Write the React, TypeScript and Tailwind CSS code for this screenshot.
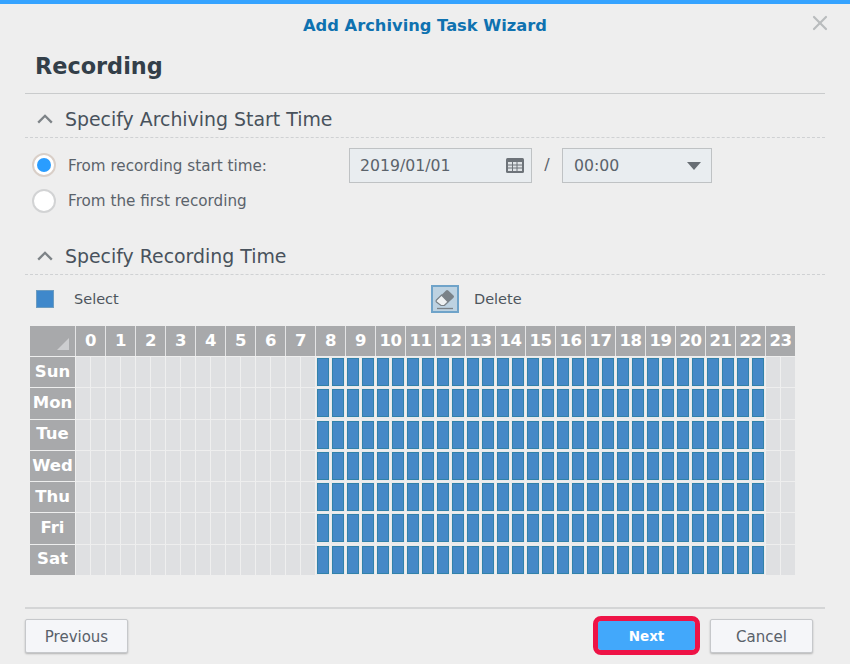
import { X } from 'lucide-react';

const hours = Array.from({ length: 24 }, (_, i) => i);
const days = ['Sun', 'Mon', 'Tue', 'Wed', 'Thu', 'Fri', 'Sat'];
const slots = Array.from({ length: 48 }, (_, i) => i);

function SectionTitle({ title }: { title: string }) {
  return (
    <div className="flex h-[44px] items-center gap-[12px] border-b border-dashed border-[#cfd1d3] pt-[6px] pl-[12px]">
      <svg width="16" height="10" viewBox="0 0 16 10" fill="none">
        <path d="M1.2 8.6 8 1.8l6.8 6.8" stroke="#7d8387" strokeWidth="2.3" />
      </svg>
      <span className="text-[18.9px] leading-[24px] text-[#48525c]">{title}</span>
    </div>
  );
}

function Radio({ checked }: { checked?: boolean }) {
  return (
    <span className={`flex h-[24px] w-[24px] items-center justify-center rounded-full border-2 bg-white ${checked ? 'border-[#d9cfc8]' : 'border-[#d2d3d4]'}`}>
      {checked && <span className="h-[14px] w-[14px] rounded-full bg-[#2a9dff]" />}
    </span>
  );
}

export default function App() {
  return (
    <div className="flex h-[664px] w-[850px] flex-col overflow-hidden border-t-4 border-[#35a3ff] bg-[#eeeeee] font-['DejaVu_Sans',sans-serif]">
      {/* title bar */}
      <div className="relative h-[42px] pt-[11px] text-center text-[16.3px] leading-[22px] font-bold text-[#0f72b0]">
        Add Archiving Task Wizard
        <X size={24} strokeWidth={2.2} className="absolute top-[7px] right-[18px] text-[#b9bcbe]" />
      </div>

      <div className="flex flex-1 flex-col px-[25px]">
        <div className="h-[48px] border-b border-[#c9cbcc] pl-[10px] text-[22.4px] leading-[40px] font-bold text-[#333f49]">
          Recording
        </div>

        <SectionTitle title="Specify Archiving Start Time" />

        {/* start time */}
        <div className="flex h-[46px] items-center pt-[8px] pl-[7px] text-[15.2px] text-[#5b636b]">
          <Radio checked />
          <span className="mt-[2px] ml-[12px] w-[281px]">From recording start time:</span>
          <div className="flex h-[35px] w-[183px] items-center justify-between border border-[#bfc2c4] bg-[#e9edf0] pt-[1px] pr-[7px] pl-[10px] text-[15.7px]">
            <span className="mt-[1px]">2019/01/01</span>
            <svg width="18" height="16" viewBox="0 0 18 16">
              <rect width="18" height="15" rx="1.5" fill="#6d7379" />
              <rect x="2" y="4" width="14" height="9" fill="#dfe3e6" />
              <path d="M2 7h14M2 10h14M6.5 4v9M11 4v9" stroke="#6d7379" strokeWidth="1" />
            </svg>
          </div>
          <span className="w-[30px] text-center text-[16px]">/</span>
          <div className="flex h-[35px] w-[150px] items-center justify-between border border-[#bfc2c4] bg-[#e9edf0] pt-[1px] pr-[10px] pl-[11px] text-[15.7px]">
            <span className="mt-[1px]">00:00</span>
            <svg width="14" height="8" viewBox="0 0 14 8"><path d="M0 0h14L7 8z" fill="#686e74" /></svg>
          </div>
        </div>
        <div className="flex h-[33px] items-center gap-[12px] pl-[7px] text-[15.2px] text-[#5b636b]">
          <Radio />
          <span className="mt-[2px]">From the first recording</span>
        </div>

        <div className="mt-[14px]">
          <SectionTitle title="Specify Recording Time" />
        </div>

        {/* legend */}
        <div className="flex h-[51px] items-center pb-[3px] pl-[11px] text-[14.5px] text-[#4d555d]">
          <span className="h-[18px] w-[18px] border border-[#6d9cc0] bg-[#3f88cb]" />
          <span className="mt-[1px] ml-[20px] w-[357px]">Select</span>
          <span className="flex h-[28px] w-[28px] items-center justify-center border-2 border-[#6fa3c9] bg-[#bdd2e1]">
            <svg width="24" height="24" viewBox="0 0 24 24">
              <path d="M3.5 13 13 3.5a1.6 1.6 0 0 1 2.2 0l5.3 5a1.6 1.6 0 0 1 0 2.2L12 18.5H8L3.5 15a1.4 1.4 0 0 1 0-2z" fill="#7a8288" />
              <path d="M8.5 8 15 14.8l-3.7 3.7H8L3.5 15a1.4 1.4 0 0 1 0-2z" fill="#eef1f2" stroke="#7a8288" strokeWidth="1.2" />
              <path d="M4 21.5h16" stroke="#7a8288" strokeWidth="1.3" />
            </svg>
          </span>
          <span className="mt-[1px] ml-[15px]">Delete</span>
        </div>

        {/* schedule grid */}
        <div className="ml-[5px] w-[765px]">
          <div className="flex h-[30px] font-bold text-white">
            <div className="relative h-full w-[45px] bg-[#a8a9ab]">
              <span className="absolute right-[6px] bottom-[6px] h-0 w-0 border-b-[12px] border-l-[12px] border-b-[#cdced0] border-l-transparent" />
            </div>
            {hours.map((h) => (
              <div key={h} className="flex h-full w-[30px] items-center justify-center border-l border-[#e4e4e5] bg-[#a8a9ab] text-[16.5px] tracking-[-0.4px]">
                {h}
              </div>
            ))}
          </div>
          {days.map((d) => (
            <div key={d} className="mt-[1px] flex h-[30.28px]">
              <div className="flex h-full w-[45px] items-center justify-center bg-[#a8a9ab] text-[16.5px] font-bold text-white">
                {d}
              </div>
              {slots.map((s) =>
                s >= 16 && s < 46 ? (
                  <div key={s} className="h-full w-[15px] border-l border-[#efefef] bg-[#e9eaeb]">
                    <div className="mt-[1px] ml-[1px] h-[28px] w-[12px] border border-[#3282aa] bg-[#4689c7]" />
                  </div>
                ) : (
                  <div key={s} className="h-full w-[15px] border-l border-[#efefef] bg-[#dfe0e2]" />
                ),
              )}
            </div>
          ))}
        </div>

        {/* footer */}
        <div className="mt-[32px] h-[12px] border-t-2 border-[#d4d5d6]" />
        <div className="flex items-center">
          <button className="h-[34px] w-[103px] rounded-[2px] border border-[#c6c8cb] bg-[#f5f6f9] pt-[2px] text-[15px] text-[#59616a] shadow-[0_1px_2px_rgba(0,0,0,0.25)]">
            Previous
          </button>
          <button className="mr-[15px] ml-auto h-[29px] w-[97px] rounded-[3px] bg-[#42a8fb] text-[13.5px] font-bold text-white outline-[5px] outline-[#ee1346]">
            Next
          </button>
          <button className="mr-[12px] h-[34px] w-[103px] rounded-[2px] border border-[#c6c8cb] bg-[#f5f6f9] pt-[2px] text-[15px] text-[#59616a] shadow-[0_1px_2px_rgba(0,0,0,0.25)]">
            Cancel
          </button>
        </div>
      </div>
    </div>
  );
}
